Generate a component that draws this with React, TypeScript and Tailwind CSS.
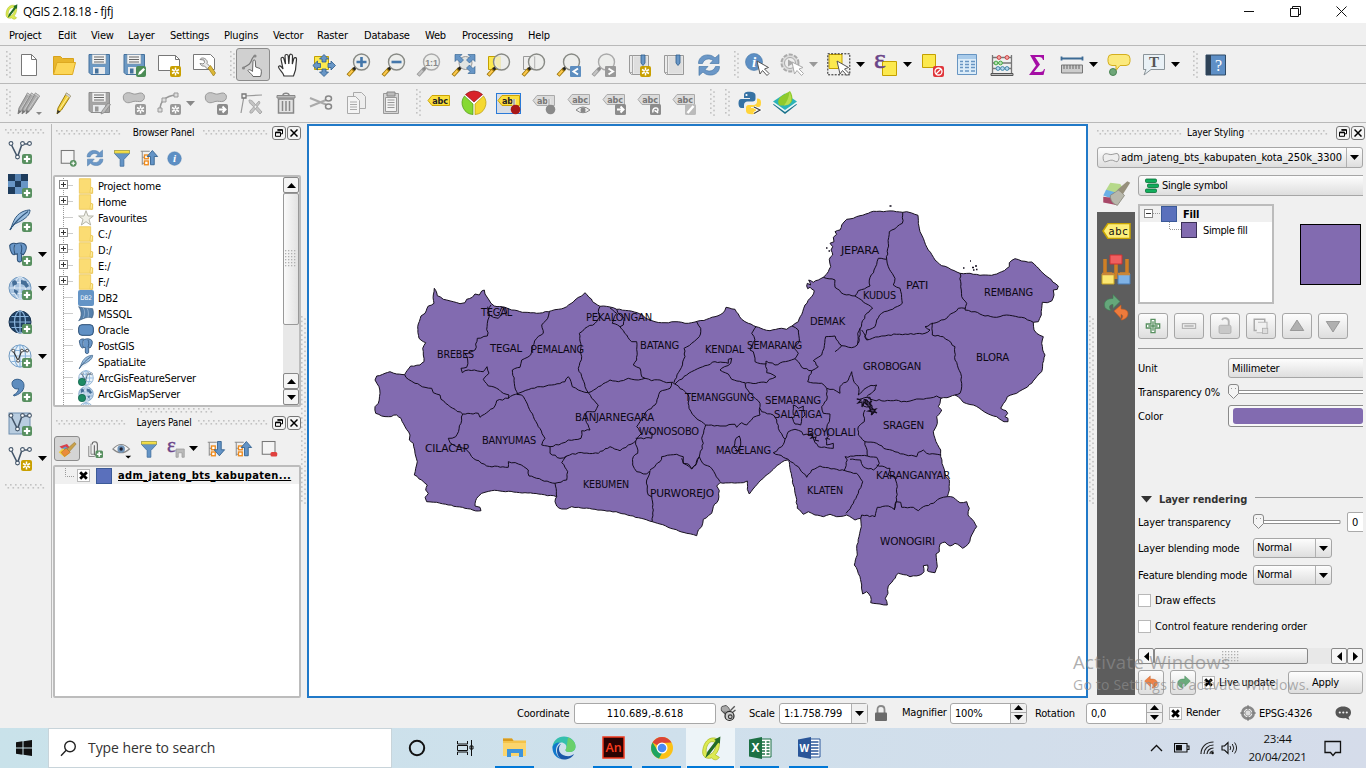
import React from "react";

type Kids = { children?: React.ReactNode };

/* ---------- icon helpers ---------- */
const I = ({ children, s = 24 }: Kids & { s?: number }) => (
  <svg width={s} height={s} viewBox="0 0 24 24" className="block shrink-0 overflow-visible" fill="none">
    {children}
  </svg>
);
const Caret = ({ c = "#000" }: { c?: string }) => (
  <svg width="9" height="5" viewBox="0 0 9 5" className="block shrink-0">
    <path d="M0 0h9L4.500 5z" fill={c} />
  </svg>
);
const GripV = ({ h = 28 }: { h?: number }) => (
  <svg width="6" height={h} className="block shrink-0">
    {Array.from({ length: Math.floor(h / 4.6) }, (_, i) => (
      <g key={i} fill="#c2c2c2">
        <rect x="0" y={i * 4.6} width="1.600" height="1.600" />
        <rect x="3.200" y={i * 4.6 + 2.3} width="1.600" height="1.600" />
      </g>
    ))}
  </svg>
);
const GripH = ({ w }: { w: number }) => (
  <svg width={w} height="6" className="block shrink-0">
    {Array.from({ length: Math.floor(w / 5) }, (_, i) => (
      <g key={i} fill="#c2c2c2">
        <rect x={i * 5} y="0" width="1.600" height="1.600" />
        <rect x={i * 5 + 2.5} y="3" width="1.600" height="1.600" />
      </g>
    ))}
  </svg>
);
const Plus = ({ x = 14, y = 14 }: { x?: number; y?: number }) => (
  <g>
    <rect x={x} y={y} width="10" height="10" rx="2" fill="#589060" />
    <path d={`M${x + 5} ${y + 1.8}v6.400M${x + 1.8} ${y + 5}h6.400`} stroke="#fff" strokeWidth="2.200" />
  </g>
);
const Star = ({ x = 13, y = 13, f = "#c9a000" }: { x?: number; y?: number; f?: string }) => (
  <g>
    <rect x={x} y={y} width="11" height="11" rx="2" fill={f} />
    <path d={`M${x + 5.5} ${y + 1.5}v8M${x + 2} ${y + 3.5}l7 4M${x + 9} ${y + 3.5}l-7 4`} stroke="#fff" strokeWidth="1.500" />
    <circle cx={x + 5.5} cy={y + 5.5} r="1" fill={f} />
  </g>
);
const Arrow = ({ x = 12, y = 8 }: { x?: number; y?: number }) => (
  <path d={`M${x} ${y}l3 13 2.500-3.500 4.500 5 2-2-4.500-4.500 4-1.500z`} fill="#fff" stroke="#555" strokeWidth="1" />
);

const FileNew = () => (
  <I><path d="M4.500 1.500h10l5 5v16h-15z" fill="#fff" stroke="#777" /><path d="M14.500 1.500v5h5" stroke="#777" /></I>
);
const FolderOpen = () => (
  <I>
    <path d="M1.500 21V3.500h7l2 2h11V9" fill="#e8b62c" stroke="#d8a21c" />
    <path d="M1.500 21.500L5 9.500h18.500l-3 12z" fill="#fcd657" stroke="#dda921" />
  </I>
);
const Floppy = ({ g = false, children }: Kids & { g?: boolean }) => (
  <I>
    <path d="M2 1.500h20.500v20H4l-2-2z" fill={g ? "#a5a5a5" : "#6c99c4"} stroke={g ? "#8c8c8c" : "#44719c"} />
    <path d="M5 1.500h14v9.500H5z" fill="#f2f2f2" stroke={g ? "#999" : "#7d94aa"} strokeWidth=".6" />
    <path d="M7 4h10M7 6.500h10M7 9h10" stroke="#666" />
    <path d="M6 14h12v7H6z" fill="#e8eaec" /><path d="M8 15.500h3.500v5H8z" fill={g ? "#999" : "#44719c"} />
    {children}
  </I>
);
const SaveEdit = () => (
  <Floppy><rect x="14" y="13" width="10" height="11" rx="2" fill="#4b8c55" /><path d="M16 22l1-3 4.500-4 1.500 1.500-4 4.500z" fill="#fff" /></Floppy>
);
const ComposerNew = () => (
  <I><path d="M1.500 2.500h17l4 4v11h-21z" fill="#fff" stroke="#777" /><path d="M18.500 2.500v4h4" stroke="#777" /><Star /></I>
);
const Wrench = () => (
  <I>
    <path d="M1.500 1.500h17l4 4v11h-21z" fill="#fff" stroke="#777" />
    <path d="M8 6.500c1-2 4-2 6 0 1.500 1.500 1.500 3 1 4l3 3-2.500 2.500-3-3c-2.500.5-4-1-4.500-2.500l3 .5 1.500-1.500-.5-2.500z" fill="#e8e8e8" stroke="#888" />
    <path d="M16 15l2.500-2.500 5 7.500-2 3z" fill="#dcb838" stroke="#9a7a18" strokeWidth=".7" />
  </I>
);
const Touch = () => (
  <I>
    <path d="M12 23.500c-1-3-5-4.500-5-6 .5-1.500 2.500-1 4.500 1L12 8c.3-1.500 2-1.500 2.300 0l.4 6 4.300 1.500c2 1 1.500 5 .5 8z" fill="#fff" stroke="#666" />
    <path d="M2 15l5-3c2-1 3-3 4-6l2-3" stroke="#777" strokeWidth="1.200" /><circle cx="14" cy="3" r="1.600" fill="#888" /><circle cx="2.500" cy="15" r="1.600" fill="#888" />
  </I>
);
const HandPan = () => (
  <I>
    <path d="M8 23c-1-4-5-6-5.500-9 .5-2 3-1 4.500 2L5 6c0-2 2.500-2.500 3 0l1.500 5L9 3c0-2 3-2 3.200 0l.6 8L13.500 2.500c.5-2 3-1.500 3 .5l-.2 8 1.500-5.500c1-1.500 3-1 2.700 1L19.500 17l-2 6z" fill="#fff" stroke="#333" strokeWidth="1.200" />
  </I>
);
const PanSel = () => (
  <I>
    <path d="M2.500 3.500h14v13h-14z" fill="#fce94f" stroke="#c4a000" />
    <path d="M12 1.500l4.500 4.500h-2.500v3h-4V6H7.500zM12 23.500l-4.500-4.500H10v-3h4v3h2.500zM.8 12.500l4.700-4.500v2.500h3v4h-3V17zM23.500 12.500L19 8v2.500h-3v4h3V17z" fill="#6896c6" stroke="#2c5c8c" strokeWidth=".8" />
  </I>
);
const Lens = ({ g = false, back, children }: Kids & { g?: boolean; back?: React.ReactNode }) => (
  <I>
    {back}
    <path d="M7.500 15.500L1 22.500" stroke={g ? "#999" : "#9a7408"} strokeWidth="4" />
    <path d="M5.500 17.500L1.500 22" stroke={g ? "#c4c4c4" : "#fcc84c"} strokeWidth="2.200" />
    <path d="M9 14L6.500 16.500" stroke={g ? "#888" : "#222"} strokeWidth="3" />
    <circle cx="14.500" cy="9" r="8" fill="#ecedeb" fillOpacity=".85" stroke={g ? "#aaa" : "#888a85"} strokeWidth="1.400" />
    {children}
  </I>
);
const ZoomIn = () => <Lens><path d="M14.500 4v10M9.500 9h10" stroke="#4477aa" strokeWidth="2.600" /></Lens>;
const ZoomOut = () => <Lens><path d="M9.500 9h10" stroke="#4477aa" strokeWidth="2.600" /></Lens>;
const Zoom11 = () => (
  <Lens g><text x="14.500" y="12.500" fontSize="9" fontWeight="700" textAnchor="middle" fill="#888" fontFamily="Liberation Sans, sans-serif">1:1</text></Lens>
);
const ZoomFull = () => (
  <I>
    <path d="M7.500 15.500L1 22.500" stroke="#9a7408" strokeWidth="4" /><path d="M5.500 17.500L1.500 22" stroke="#fcc84c" strokeWidth="2.200" /><path d="M9 14L6.500 16.500" stroke="#222" strokeWidth="3" />
    <circle cx="13.500" cy="10" r="6.500" fill="#e2e4e2" stroke="#999" />
    <path d="M3 1.500h7L8 3.500l3.500 3.500-3 3L5 6.500l-2 2zM23 1.500h-7l2 2L14.500 7l3 3L21 6.500l2 2zM23 20.500h-7l2-2-3.500-3.500 3-3 3.500 3.500 2-2z" fill="#6896c6" stroke="#2c5c8c" strokeWidth=".6" />
  </I>
);
const ZoomSel = () => <Lens back={<path d="M1.500 3.500h12v13h-12z" fill="#fce94f" stroke="#c4a000" />}><path d="M8.500 4h5v11q-5-2-5-6z" fill="#f3ebb0" /></Lens>;
const ZoomLayer = () => <Lens back={<path d="M1.500 3.500h12v13h-12z" fill="#eee" stroke="#999" />}><path d="M12.500 3.500v12" stroke="#bbb" /></Lens>;
const ZoomLast = () => <Lens><rect x="13" y="13" width="11" height="11" rx="1" fill="#5d8ec0" /><path d="M21 15.500l-4.500 3 4.500 3" stroke="#fff" strokeWidth="2" /></Lens>;
const ZoomNext = () => <Lens g><rect x="13" y="13" width="11" height="11" rx="1" fill="#999" /><path d="M16.500 15.500l4.500 3-4.500 3" stroke="#fff" strokeWidth="2" /></Lens>;
const Bookmark = ({ n = false }: { n?: boolean }) => (
  <I>
    <path d="M2.500 2.500h19v19h-17l-2-2z" fill="#ececec" stroke="#999" /><path d="M2.500 19.500h3M5.500 2.500v19" stroke="#aaa" /><path d="M7 3.500h13.500v17H7z" fill="#dedede" />
    <path d="M14 2h4v8l-2 2.500-2-2.500z" fill="#6896c6" stroke="#2c5c8c" strokeWidth=".8" />
    {n && <Star />}
  </I>
);
const Refresh = ({ s = 24 }: { s?: number }) => (
  <I s={s}>
    <path d="M1.500 10.500c0-6 5-9 10-8.500 3 .2 5 1.500 6.500 3L22 1.500v9h-9l3-3C12 4.500 7 6 5.500 10.500z" fill="#6b97c7" stroke="#4878a8" strokeWidth=".7" />
    <path d="M22.500 13.500c0 6-5 9-10 8.500-3-.2-5-1.500-6.500-3L2 22.500v-9h9l-3 3c4 3 9 1.500 10.500-3z" fill="#6b97c7" stroke="#4878a8" strokeWidth=".7" />
  </I>
);
const Info = ({ s = 24, arrow = true }: { s?: number; arrow?: boolean }) => (
  <I s={s}>
    <circle cx={arrow ? 9 : 12} cy={arrow ? 9 : 12} r={arrow ? 8.5 : 11} fill="#5d8fc4" stroke="#4878a8" strokeWidth=".6" />
    <text x={arrow ? 9 : 12} y={arrow ? 14 : 18} fontSize={arrow ? 15 : 18} fontStyle="italic" fontWeight="700" textAnchor="middle" fill="#fff" fontFamily="Liberation Serif, serif">i</text>
    {arrow && <Arrow />}
  </I>
);
const Action = () => (
  <I>
    <circle cx="10" cy="10" r="8.500" fill="#ddd" stroke="#aaa" strokeWidth="2" strokeDasharray="4 1.500" /><circle cx="10" cy="10" r="5.500" fill="#eee" stroke="#aaa" /><path d="M8 6.500l6 3.500-6 3.500z" fill="#aaa" />
    <path d="M12 9l2.500 12 2.500-3.500 4.500 5 2-2-4.500-4.500 4-1.500z" fill="#fff" stroke="#aaa" />
  </I>
);
const SelectF = () => (
  <I><path d="M2 1.500h13v14H2z" fill="#fce94f" stroke="#c4a000" /><rect x=".8" y=".8" width="22" height="21" stroke="#222" strokeDasharray="2 1.300" /><Arrow x={10} y={8} /></I>
);
const SelectExpr = () => (
  <I>
    <path d="M8.500 8.500h14v14h-14z" fill="#fce94f" stroke="#c4a000" />
    <text x="0" y="15" fontSize="28" fill="#6a4488" stroke="#6a4488" strokeWidth=".5" fontFamily="Liberation Serif, serif">ε</text>
  </I>
);
const Deselect = () => (
  <I><path d="M2.500 1.500h13v13h-13z" fill="#fce94f" stroke="#c4a000" /><rect x="13" y="13" width="11" height="11" rx="2" fill="#e0363b" /><circle cx="18.500" cy="18.500" r="3.500" stroke="#fff" strokeWidth="1.300" /><path d="M16 21l5-5" stroke="#fff" strokeWidth="1.300" /></I>
);
const AttrTable = () => (
  <I><path d="M2.500 1.500h19v20h-19z" fill="#dcecf8" stroke="#6795c2" /><path d="M3 2h18v4H3z" fill="#a9cbea" /><path d="M5 8.500h3M10 8.500h4M16 8.500h4M5 11.500h3M10 11.500h4M16 11.500h4M5 14.500h3M10 14.500h4M16 14.500h4M5 18h3M10 18h4M16 18h4" stroke="#6795c2" strokeWidth="1.500" /></I>
);
const Abacus = () => (
  <I>
    <path d="M2.500 2v18M21.500 2v18M3 4.500h18M3 10h18M3 15.500h18" stroke="#777" strokeWidth="1.300" /><path d="M1 20.500h22v2H1z" fill="#bbb" stroke="#555" />
    <g strokeWidth="1"><g fill="#f6a8a8" stroke="#c44"><circle cx="9" cy="4.500" r="1.900" /><circle cx="17" cy="4.500" r="1.900" /></g>
      <g fill="#b8e0b8" stroke="#4a4"><circle cx="6" cy="10" r="1.900" /><circle cx="10.500" cy="10" r="1.900" /></g>
      <g fill="#b8d8f0" stroke="#48a"><circle cx="8" cy="15.500" r="1.900" /><circle cx="12.500" cy="15.500" r="1.900" /><circle cx="17" cy="15.500" r="1.900" /></g></g>
  </I>
);
const Sigma = () => <I><path d="M5 2h14v5h-1c-.5-2-1.500-3-4-3H10l5 7.500L9 19h6c2.500 0 3.500-1 4-3h1l-1.500 6H4l7-9.500z" fill="#a50ea5" /></I>;
const Ruler = () => (
  <I><path d="M1 5.500h22M1.500 3.500v4M22.500 3.500v4" stroke="#3c6a94" strokeWidth="1.800" /><path d="M1.500 12h21v8h-21z" fill="#ccc" stroke="#777" /><path d="M4 12v4M7 12v4M10 12v4M13 12v4M16 12v4M19 12v4" stroke="#666" /></I>
);
const MapTip = () => (
  <I><path d="M5 1.500h14q4 0 4 4v3q0 4-4 4h-6l-4 5 0-5H5q-4 0-4-4v-3q0-4 4-4z" fill="#fbe97d" stroke="#d4ae1e" /><circle cx="6" cy="19" r="3.500" fill="#6fa678" stroke="#4a8554" /></I>
);
const TextAnn = () => (
  <I><path d="M1.500 1.500h21v15H9l-7 5.500 2-5.500H1.500z" fill="#e9f1f6" stroke="#8b9499" /><text x="12" y="14" fontSize="15" fontWeight="700" textAnchor="middle" fill="#555" fontFamily="Liberation Serif, serif">T</text></I>
);
const HelpBook = () => (
  <I><path d="M2 2h19.500v20H2z" fill="#5e8fc6" stroke="#2e4a66" /><path d="M2 2h5v20H2z" fill="#2e4257" /><text x="14.500" y="17.500" fontSize="16" textAnchor="middle" fill="#fff" fontFamily="Liberation Serif, serif">?</text></I>
);
const Pencil = ({ x = 0, g = false }: { x?: number; g?: boolean }) => (
  <g transform={`translate(${x} 0)`}>
    <path d="M13.500 2l4 3-9 14-4.500 4 1-6z" fill={g ? "#aaa" : "#f2cf3c"} stroke={g ? "#8a8a8a" : "#9a7d10"} />
    <path d="M12.500 3.500l4.200 3.200 1-1.700-4-3z" fill={g ? "#ccc" : "#d8d8d8"} stroke="#999" strokeWidth=".6" /><path d="M4.500 19l-.5 4 3.500-2.500z" fill={g ? "#777" : "#333"} />
    <path d="M15 5.500l-8.500 13" stroke={g ? "#ccc" : "#fdf0a0"} />
  </g>
);
const EditsAll = () => (
  <I><g><Pencil g x={-3} /><Pencil g x={1} /><Pencil g x={5} /></g><path d="M19 21h6l-3 3z" fill="#888" /></I>
);
const EditToggle = () => <I><Pencil x={1} /></I>;
const SaveG = () => <Floppy g><path d="M14 23l1-3 6-8 2.500 1.500-6 8z" fill="#bbb" stroke="#888" strokeWidth=".8" /></Floppy>;
const BLOB = "M1.500 8C0 2 6 .5 10 2.500c3 1.500 5 0 8-.5 5-.5 6 6 2 8-3 1.500-6-.5-9 .5C8 12 3 13 1.500 8z";
const AddPoly = () => <I><path d={BLOB} fill="#c4c4c4" stroke="#999" /><Star f="#999" /></I>;
const AddCurve = () => <I><path d="M3 19C3 10 8 5 19 4" stroke="#999" strokeWidth="1.500" /><path d="M1 17h4v4H1zM5 7h4v4H5zM17 2h4v4h-4z" fill="#ddd" stroke="#999" /><Star f="#999" /></I>;
const MoveF = () => <I><path d={BLOB} fill="#c4c4c4" stroke="#999" /><rect x="13" y="13" width="11" height="11" rx="2" fill="#8c8c8c" /><path d="M15 18.500h6M18.500 15.500l3 3-3 3" stroke="#fff" strokeWidth="2" /></I>;
const NodeTool = () => <I><path d="M5 5L2 22M5 5l18-1" stroke="#999" strokeWidth="1.200" /><path d="M3 3h4v4H3z" fill="#eee" stroke="#777" strokeWidth="1.300" /><path d="M10 9c2 0 4 1 5 3l8 9-2 2-8-9c-2-1-3-3-3-5zM20 10l-9 10 0 2 2 0 8-10z" fill="#c4c4c4" stroke="#aaa" /></I>;
const Trash = () => <I><path d="M4.500 8h15v14h-15z" fill="#e4e4e4" stroke="#888" strokeWidth="1.500" /><path d="M3 4.500h18v2.500H3z" fill="#bbb" stroke="#888" /><path d="M9 4c0-2.500 6-2.500 6 0M8.500 10v10M12 10v10M15.500 10v10" stroke="#888" strokeWidth="1.500" /></I>;
const Scissors = () => <I><path d="M1 7l16 6.500M1 15.500L17 9" stroke="#aaa" strokeWidth="2" /><ellipse cx="19.500" cy="7.500" rx="3" ry="2.500" stroke="#888" strokeWidth="1.500" /><ellipse cx="19.500" cy="15.500" rx="3" ry="2.500" stroke="#888" strokeWidth="1.500" /></I>;
const Copy = () => <I><path d="M9.500 1.500h8l4 4v12h-12z" fill="#eee" stroke="#aaa" /><path d="M3.500 5.500h8l4 4v13h-12z" fill="#f4f4f4" stroke="#aaa" /><path d="M6 11h7M6 13.500h7M6 16h7M6 18.500h7" stroke="#aaa" /></I>;
const Paste = () => <I><path d="M4.500 2.500h15v20h-15z" fill="#d4d4d4" stroke="#999" /><path d="M6.500 6.500h11v14h-11z" fill="#f2f2f2" stroke="#999" /><path d="M8 1h8v4H8z" fill="#bbb" stroke="#888" /><path d="M8.500 9h7M8.500 11.500h7M8.500 14h7M8.500 16.500h7" stroke="#999" /></I>;

const Tag = ({ g = false, y = 5, t = "abc" }: { g?: boolean; y?: number; t?: string }) => (
  <g transform={`translate(0 ${y})`}>
    <path d="M1 5.500L5 .5h17.500v10H5z" fill={g ? "#dcdcdc" : "#fbdf3e"} stroke={g ? "#aaa" : "#cda505"} />
    <text x={t === "abc" ? 13 : 10.5} y="8.800" fontSize="9" fontWeight="700" textAnchor="middle" fill={g ? "#777" : "#222"} fontFamily="DejaVu Sans Condensed, sans-serif">{t}</text>
  </g>
);
const LblPlain = () => <I><Tag y={4} /></I>;
const LblPie = () => (
  <I><circle cx="12" cy="12" r="11" fill="#fff" /><path d="M12 11L3.500 3.500a12 12 0 0 1 17 0z" fill="#d8232a" stroke="#8a1015" strokeWidth=".7" /><path d="M11 13v10.500A11.500 11.500 0 0 1 2.500 5z" fill="#86d932" stroke="#4c9410" strokeWidth=".7" /><path d="M13 13v10.500A11.500 11.500 0 0 0 21.500 5z" fill="#f5d931" stroke="#b89a10" strokeWidth=".7" /></I>
);
const LblPin = ({ g = false }: { g?: boolean }) => (
  <I><Tag g={g} y={4} t="ab" /><path d="M17 8v8" stroke="#eee" strokeWidth="3" /><path d="M17 8v8" stroke={g ? "#999" : "#777"} /><circle cx="18.500" cy="18.500" r="4.800" fill={g ? "#8a8a8a" : "#a81818"} /></I>
);
const LblEye = () => <I><Tag g y={3} /><path d="M9 19q7-6 14 0-7 5.500-14 0z" fill="#eee" stroke="#888" /><circle cx="16" cy="19" r="2.500" fill="#888" /></I>;
const LblBox = ({ k }: { k: string }) => (
  <I><Tag g y={3} /><rect x="13" y="13" width="11" height="11" rx="1.500" fill={k === "edit" ? "#bbb" : "#8c8c8c"} />
    {k === "move" && <path d="M15 18.500h6M18.500 15.500l3 3-3 3" stroke="#fff" strokeWidth="2" />}
    {k === "rot" && <path d="M16 21.500c-1-5 5-6 5-2.500 0 2-3 2-3 0M21 22l-2-2" stroke="#fff" strokeWidth="1.500" />}
    {k === "edit" && <path d="M15.500 22l6-7" stroke="#fff" strokeWidth="2.500" />}
  </I>
);
const Python = () => (
  <I>
    <path d="M11 .8c-4 0-5 1.500-5 3.500V7h6v1H3.500C1 8 .5 10 .5 12.500S1.500 17 3.500 17H6v-3c0-2 1.500-3.500 3.500-3.500h5c2 0 3-1 3-3v-3c0-2.500-2-3.700-6.500-3.700z" fill="#3672a4" />
    <path d="M19 7.500v3.300c0 2-1.500 3.200-3.500 3.200h-5c-1.500 0-2.500 1-2.500 3v3c0 2 2 3.300 5.500 3.300S18 22 18 20.500V17h-5v-1h7c2.500 0 3-1.500 3-4.500 0-2.500-1-4-4-4z" fill="#ffd43b" />
    <circle cx="8.500" cy="4" r="1.100" fill="#fff" /><path d="M16 16l6 3-6 3.500" stroke="#fff" strokeWidth="3" /><path d="M16 16l6 3-6 3.500" stroke="#444" strokeWidth="1.300" />
  </I>
);
const Leaf = () => (
  <I>
    <path d="M12 5.500l12 8-12 9.500-12-9.500z" fill="#17708a" /><path d="M12 4.500l12 8-12 8.500L0 12.500z" fill="#e8f6f8" /><path d="M12 2.500l12 8-12 8.500L0 10.500z" fill="#2bb3b8" />
    <path d="M6 14C3 6 11 4 17 0c4 6 3 13-3 14-3 .5-6 1-8 0z" fill="#8fca2c" /><path d="M11 14.500C14 11 16 6 16.500 1c3 6 2 12-2.500 13z" fill="#b4de50" />
  </I>
);

/* left toolbar */
const VNodes = ({ c = "#44566a" }: { c?: string }) => (
  <g stroke={c} fill="none"><path d="M3 4l6.500 13L14 4h7" strokeWidth="1.600" /><g fill="#fff" strokeWidth="1.100"><circle cx="3" cy="3.500" r="1.900" /><circle cx="9.500" cy="17" r="1.900" /><circle cx="14.500" cy="3.500" r="1.900" /><circle cx="21.500" cy="3.500" r="1.900" /></g></g>
);
const Globe = ({ dark = false, light = false }: { dark?: boolean; light?: boolean }) => (
  <g>
    <circle cx="12" cy="12" r="11" fill={dark ? "#1f3f62" : light ? "#eaf3fa" : "#a9c4e0"} stroke={dark ? "#17324f" : "#6f98bf"} />
    <g stroke={dark ? "#8ab4dc" : light ? "#8ab4dc" : "#dce8f4"} strokeWidth="1.200"><path d="M1.500 12h21M12 1v22M3.500 6.500h17M3.500 17.500h17" /><ellipse cx="12" cy="12" rx="5.500" ry="11" /></g>
    {!dark && !light && <path d="M4 6c2-3 5-2 5 1s-3 1-4 4zM13 4l5 1 3 5-3 2-2-3-3-1zM6 13l4 2-1 4-3-3zM14 16l4-2-1 5z" fill="#446e98" />}
  </g>
);
const Elephant = () => (
  <path d="M2 4c2-3 6-3 8-2 3-1.500 9-1 11 2 1.500 3-.5 8-3 11l-2-1v8c-1 2-5 2-5-1v-7l-3 .5C5 17 2 9 2 4z M8 3c-1 3-1 7 0 11M15 3c2 3 1 8 0 11" fill="#6a97c8" stroke="#2b4f76" strokeWidth="1.200" />
);
const Feather = () => (
  <g><path d="M2 22c3-6 4-14 12-18 3-1.500 6-2 8-2 0 4-3 7-6 9-5 4-10 4-12 8z" fill="#9cbfe0" stroke="#31587f" /><path d="M2 22C7 14 12 9 20 3.500" stroke="#31587f" strokeWidth="1.200" /><path d="M4 20c5-2 9-4 12-8" stroke="#dce8f4" /></g>
);
const VecAdd = () => <I><VNodes /><Plus /></I>;
const RasAdd = () => (
  <I><path d="M0 0h20v20H0z" fill="#6896c6" /><path d="M0 0h7v7H0zM13 0h7v7h-7zM7 7h6v6H7zM0 13h7v7H0z" fill="#1e3c5c" /><path d="M7 0h6v7H7z" fill="#5580ae" /><Plus /></I>
);
const FeaAdd = () => <I><Feather /><Plus /></I>;
const PgAdd = () => <I><g transform="scale(.85)"><Elephant /></g><Plus /></I>;
const WmsAdd = () => <I><Globe /><Plus /></I>;
const WcsAdd = () => <I><Globe dark /><Plus /></I>;
const WfsAdd = () => <I><Globe light /><g transform="translate(3 4) scale(.75)"><VNodes c="#333" /></g><Plus /></I>;
const CsvAdd = () => <I><path d="M4 5.500c0-6 12-6 12 2 0 6-5 9-10 10.500l-.5-1c3-1.500 5-3.500 5-6.500C7 12 4 9 4 5.500z" fill="#5f8dbe" stroke="#36608c" /><Plus /></I>;
const VirtAdd = () => <I><rect x="1" y="1" width="21" height="21" fill="#b9cde0" stroke="#6f8eae" /><VNodes /><Plus /></I>;
const VecNew = () => <I><VNodes /><Star y={14} /></I>;

/* panel icons */
const NewLayerBox = ({ minus = false }: { minus?: boolean }) => (
  <I s={18}><rect x="3" y="2" width="17" height="17" stroke="#777" strokeWidth="1.400" fill="#f4f4f4" />
    {minus ? <rect x="14" y="16" width="9" height="6" rx="2" fill="#e0413e" /> : <g><circle cx="19" cy="19" r="4.500" fill="#589060" /><path d="M16.500 19h5M19 16.500v5" stroke="#fff" strokeWidth="1.500" /></g>}
  </I>
);
const Funnel = () => (
  <I s={18}><path d="M2 2h20v4l-7.500 8v9h-5v-9L2 6z" fill="#6494c6" stroke="#3b6a9a" /><path d="M2 2h20v3.500H2z" fill="#f6e04a" stroke="#c0a82a" strokeWidth=".7" /></I>
);
const Collapse = ({ down = false }: { down?: boolean }) => (
  <I s={18}><path d="M1 3h12M3 3v18M3 11h4M3 19h4" stroke="#888" strokeWidth="1.300" /><rect x="6" y="8" width="5" height="5" fill="#fff" stroke="#ef8a1a" strokeWidth="1.800" /><rect x="6" y="16" width="5" height="5" fill="#fff" stroke="#ef8a1a" strokeWidth="1.800" />
    <path d={down ? "M14 2h5v11h4.500L16.500 21l-7-8H14z" : "M14 21h5V10h4.500L16.500 2l-7 8H14z"} fill="#6494c6" stroke="#2c5c8c" strokeWidth="1.100" /></I>
);
const Brush = ({ s = 20 }: { s?: number }) => (
  <I s={s}><path d="M3 9l9-3 4 5-7 3z" fill="#d8404a" /><path d="M5 12l5-3 5 3-3 3z" fill="#5a9fd4" /><path d="M9 22l-7-6 5-5 8 6z" fill="#f4d03c" /><path d="M9 21L5 16l6-5 5 5z" fill="#e98c3c" stroke="#b36412" strokeWidth=".6" /><path d="M12 12l9-8 2 2-8 9z" fill="#c9a04a" stroke="#97752c" strokeWidth=".6" /></I>
);
const AddGroup = () => <I s={18}><path d="M5 8v14h8M8 5v14h8" stroke="#888" strokeWidth="1.300" /><path d="M9.500 6c0-5 7-5 7 0v12c0 3-4 3-4 0V7" stroke="#666" strokeWidth="1.500" /><Plus y={14} /></I>;
const Eye = () => <I s={20}><path d="M1 12q10-11 20 0-10 9-20 0z" fill="#f4f4f4" stroke="#888" strokeWidth="1.300" /><circle cx="11" cy="12" r="4.500" fill="#6f93b8" /><circle cx="11" cy="12" r="2" fill="#223" /><path d="M16 20h7l-3.500 3.500z" fill="#000" /></I>;
const EpsFilter = () => <I s={18}><text x="0" y="16" fontSize="28" fill="#6a4488" stroke="#6a4488" strokeWidth=".6" fontFamily="Liberation Serif, serif">ε</text><path d="M12 12h11v11h-3v-6h-5v6h-3z" fill="#bbb" stroke="#999" /></I>;

/* ---------- form widgets ---------- */
const BTN = "bg-linear-to-b from-[#fdfdfd] to-[#dedede] border border-[#a6a6a6] rounded-[3px]";
const WinBtns = () => (
  <div className="flex gap-[1px]">
    <div className="w-[14px] h-[14px] rounded-[3px] border border-[#777] bg-[#f4f4f4] flex items-center justify-center">
      <svg width="8" height="8" viewBox="0 0 8 8"><path d="M2.500.8h5v4h-2M.5 3.300h5v4h-5z" fill="none" stroke="#000" /><path d="M2.500 1h5M.5 3.500h5" stroke="#000" strokeWidth="1.500" /></svg>
    </div>
    <div className="w-[14px] h-[14px] rounded-[3px] border border-[#777] bg-[#f4f4f4] flex items-center justify-center">
      <svg width="8" height="8" viewBox="0 0 8 8"><path d="M.5.5l7 7M7.500.5l-7 7" stroke="#000" strokeWidth="1.500" /></svg>
    </div>
  </div>
);
const PanelHead = ({ t, l, m, r }: { t: string; l: number; m: string; r: number }) => (
  <div className="flex h-[17px] items-center">
    <GripH w={l} /><div className={"text-center text-[10px] tracking-[-0.150px] " + m}>{t}</div><GripH w={r} />
    <div className="ml-auto"><WinBtns /></div>
  </div>
);
const Combo = ({ t, c }: { t: string; c: string }) => (
  <div className={BTN + " flex h-[20px] items-center " + c}>
    <span className="grow pl-[3px]">{t}</span>
    <div className="flex h-full w-[16px] items-center justify-center border-l border-[#b0b0b0]"><Caret /></div>
  </div>
);
const Spin = ({ t, c }: { t: string; c: string }) => (
  <div className={"flex h-[21px] items-center overflow-hidden rounded-[3px] border border-[#a8a8a8] bg-white " + c}>
    <span className="grow pl-[4px] pt-[2px]">{t}</span>
    <div className="flex h-full w-[16px] flex-col border-l border-[#a8a8a8] bg-[#f0f0f0]">
      <div className="flex h-1/2 items-center justify-center border-b border-[#a8a8a8]"><div className="rotate-180"><Caret /></div></div>
      <div className="flex h-1/2 items-center justify-center"><Caret /></div>
    </div>
  </div>
);
const Check = ({ on = false }: { on?: boolean }) => (
  <div className="flex h-[13px] w-[13px] shrink-0 items-center justify-center border border-[#b8b8b8] bg-white">
    {on && <svg width="9" height="9" viewBox="0 0 9 9"><path d="M1.200 1.200l6.600 6.600M7.800 1.200L1.200 7.800" stroke="#000" strokeWidth="2.800" /></svg>}
  </div>
);
const Slider = ({ w }: { w: number }) => (
  <svg width={w} height="16" className="block shrink-0">
    <path d={`M8 6.500H${w - 1}v3H8`} fill="#fff" stroke="#909090" />
    <path d="M.5 3q0-2.500 2.500-2.500h5q2.500 0 2.500 2.500v6.500l-5 5-5-5z" fill="#f4f4f4" stroke="#888" /><path d="M3 4.500h1M7 4.500h1" stroke="#999" />
  </svg>
);
const Undo = ({ g = false, s = 18 }: { g?: boolean; s?: number }) => (
  <I s={s}><path d={g ? "M23 9.500l-9-8v5C6 6 2 9 3 14c.5 3 4 6 8 7-2-4-2-8 3-7.500v5z" : "M1 9.500l9-8v5c8-.5 12 2.500 11 7.500-.5 3-4 6-8 7 2-4 2-8-3-7.500v5z"} fill={g ? "#6bab7c" : "#ee8347"} stroke={g ? "#3f8252" : "#c65a1e"} strokeWidth=".7" /></I>
);

/* ---------- toolbars ---------- */
const Cell = ({ children, w = "w-[35px]" }: Kids & { w?: string }) => <div className={"flex h-full shrink-0 items-center justify-center " + w}>{children}</div>;
const Drop = ({ c }: { c?: string }) => <div className="flex w-[12px] shrink-0"><Caret c={c} /></div>;

const Toolbar1 = () => (
  <div className="flex h-[39px] shrink-0 items-center border-t border-b border-[#b9b9b9] pl-[6px]">
    <GripV /><Cell w="w-[34px]"><FileNew /></Cell><Cell><FolderOpen /></Cell><Cell><Floppy /></Cell><Cell><SaveEdit /></Cell><Cell><ComposerNew /></Cell><Cell><Wrench /></Cell>
    <div className="w-[9px] shrink-0" /><GripV />
    <div className="flex h-[33px] w-[34px] shrink-0 items-center justify-center rounded-[3px] border border-[#8c8c8c] bg-[#d0d0d0]"><Touch /></div>
    <Cell w="w-[36px]"><HandPan /></Cell><Cell><PanSel /></Cell><Cell><ZoomIn /></Cell><Cell><ZoomOut /></Cell><Cell><Zoom11 /></Cell><Cell><ZoomFull /></Cell><Cell><ZoomSel /></Cell><Cell><ZoomLayer /></Cell><Cell><ZoomLast /></Cell><Cell><ZoomNext /></Cell><Cell><Bookmark n /></Cell><Cell><Bookmark /></Cell><Cell><Refresh /></Cell>
    <div className="w-[8px] shrink-0" /><GripV />
    <Cell w="w-[34px]"><Info /></Cell><Cell><Action /></Cell><Drop c="#999" /><Cell><SelectF /></Cell><Drop /><Cell><SelectExpr /></Cell><Drop /><Cell w="w-[34px]"><Deselect /></Cell><Cell><AttrTable /></Cell><Cell><Abacus /></Cell><Cell><Sigma /></Cell><Cell><Ruler /></Cell><Drop /><Cell><MapTip /></Cell><Cell><TextAnn /></Cell><Drop />
    <div className="w-[10px] shrink-0" /><GripV /><Cell w="w-[34px]"><HelpBook /></Cell>
  </div>
);
const Toolbar2 = () => (
  <div className="flex h-[39px] shrink-0 items-center border-b border-[#b9b9b9] pl-[6px]">
    <GripV /><Cell w="w-[34px]"><EditsAll /></Cell><Cell><EditToggle /></Cell><Cell><SaveG /></Cell><Cell><AddPoly /></Cell><Cell><AddCurve /></Cell><Drop c="#888" /><Cell><MoveF /></Cell><Cell><NodeTool /></Cell><Cell><Trash /></Cell><Cell><Scissors /></Cell><Cell><Copy /></Cell><Cell><Paste /></Cell>
    <div className="w-[8px] shrink-0" /><GripV />
    <Cell w="w-[34px]"><LblPlain /></Cell><Cell><LblPie /></Cell>
    <Cell><div className="flex h-[21px] w-[25px] items-center justify-center border border-[#2a7ad8] bg-[#d8dde4]"><LblPin /></div></Cell>
    <Cell><LblPin g /></Cell><Cell><LblEye /></Cell><Cell><LblBox k="move" /></Cell><Cell><LblBox k="rot" /></Cell><Cell><LblBox k="edit" /></Cell>
    <div className="w-[9px] shrink-0" /><GripV /><div className="w-[9px] shrink-0" /><GripV />
    <Cell w="w-[37px]"><Python /></Cell><Cell w="w-[33px]"><Leaf /></Cell>
  </div>
);
const SIDE: [React.ReactNode, boolean][] = [
  [<VecAdd />, false], [<RasAdd />, false], [<FeaAdd />, false], [<PgAdd />, true], [<WmsAdd />, true], [<WcsAdd />, false], [<WfsAdd />, true], [<CsvAdd />, false], [<VirtAdd />, false], [<VecNew />, true],
];
const SideBar = () => (
  <div className="flex w-[52px] shrink-0 flex-col border-r border-[#b9b9b9] pt-[5px]">
    <div className="pl-[5px]"><GripH w={42} /></div>
    {SIDE.map(([ic, d], i) => (
      <div key={i} className="flex h-[34px] items-center pl-[8px]">{ic}{d && <div className="ml-[6px]"><Caret /></div>}</div>
    ))}
    <div className="pl-[5px] pt-[9px]"><GripH w={42} /></div>
  </div>
);

/* ---------- browser tree ---------- */
const Folder = () => <I s={16}><path d="M2 1h17v13l3 1v8H2z" fill="#fbdc73" stroke="#e8bf45" /><path d="M19 14l-1 8 3 1 1-8z" fill="#fff0a8" stroke="#e8bf45" /></I>;
const TREE: [string, React.ReactNode, boolean][] = [
  ["Project home", <Folder />, true],
  ["Home", <Folder />, true],
  ["Favourites", <I s={16}><path d="M12 1l3 8h8l-6.500 5 2.500 8.500-7-5-7 5L7.500 14 1 9h8z" fill="#f0f0e8" stroke="#b4b4a8" strokeWidth="1.500" /></I>, false],
  ["C:/", <Folder />, true],
  ["D:/", <Folder />, true],
  ["E:/", <Folder />, true],
  ["F:/", <Folder />, true],
  ["DB2", <I s={16}><rect width="24" height="24" rx="3" fill="#6494c6" /><text x="12" y="15.500" fontSize="9.500" textAnchor="middle" fill="#fff" fontFamily="DejaVu Sans Condensed, sans-serif">DB2</text></I>, false],
  ["MSSQL", <I s={16}><path d="M1 1c8 3 15 2 21 3 2 6 1 10-1 14-6-3-13 1-20 4 5-6 5-14 0-21z" fill="#5580ac" stroke="#36587a" /><path d="M8 3c3 5 2 11 0 15M14 4c2 4 2 9 1 13" stroke="#a4c0dc" /></I>, false],
  ["Oracle", <I s={16}><rect x="1" y="4" width="22" height="16" rx="5" fill="#6090c4" stroke="#2b4f76" strokeWidth="1.500" /></I>, false],
  ["PostGIS", <I s={16}><Elephant /></I>, false],
  ["SpatiaLite", <I s={16}><Feather /></I>, false],
  ["ArcGisFeatureServer", <I s={16}><Globe light /><g transform="translate(4 3) scale(.75)"><VNodes /></g><circle cx="6" cy="18" r="5.500" fill="#1c8a64" stroke="#0b5b44" /></I>, false],
  ["ArcGisMapServer", <I s={16}><Globe /><circle cx="6" cy="18" r="5.500" fill="#1c8a64" stroke="#0b5b44" /></I>, false],
  ["", <I s={16}><Globe light /></I>, false],
];
const ScrollBtn = ({ up = false }: { up?: boolean }) => (
  <div className="flex h-[16px] w-full shrink-0 items-center justify-center rounded-[2px] border border-[#888] bg-[#f4f4f4]"><div className={up ? "rotate-180" : ""}><Caret /></div></div>
);
const Dots = ({ tall = false }: { tall?: boolean }) => (
  <svg width={tall ? 12 : 18} height={tall ? 18 : 11}><g fill="#b0b0b0">{Array.from({ length: tall ? 6 : 4 }, (_, r) => Array.from({ length: tall ? 4 : 6 }, (_, c) => <rect key={r + "-" + c} x={c * 3} y={r * 3} width="1.300" height="1.300" />))}</g></svg>
);
const BrowserPanel = () => (
  <div className="flex flex-col">
    <div className="pl-[3px]"><PanelHead t="Browser Panel" l={68} m="w-[79px]" r={68} /></div>
    <div className="flex h-[34px] items-center gap-[9px] pl-[6px]"><NewLayerBox /><Refresh s={18} /><Funnel /><Collapse /><Info s={15} arrow={false} /></div>
    <div className="flex h-[232px] w-[248px] overflow-hidden rounded-[2px] border-2 border-[#bcbcbc] bg-white pl-[2px]">
      <div className="grow overflow-hidden pt-[1px]">
        {TREE.map(([t, ic, e], i) => (
          <div key={i} className="flex h-[16px] items-center">
            <svg width="20" height="16" className="mr-[1px] block shrink-0">
              <path d="M6.500 0v16M6.500 7.500H16" stroke="#999" strokeDasharray="1 1" />
              {e && <g><rect x="2.500" y="2.500" width="8" height="8" fill="#fff" stroke="#888" /><path d="M4 6.500h5M6.500 4v5" stroke="#333" /></g>}
            </svg>
            {ic}
            <span className="pl-[4px] pt-[2px]">{t}</span>
          </div>
        ))}
      </div>
      <div className="flex w-[16px] shrink-0 flex-col bg-[#e8e8e8]">
        <ScrollBtn up />
        <div className="flex h-[132px] items-center justify-center rounded-[2px] border border-[#999] bg-linear-to-r from-[#fafafa] to-[#e2e2e2]"><Dots tall /></div>
        <div className="grow" />
        <ScrollBtn up /><ScrollBtn />
      </div>
    </div>
  </div>
);
const LayersPanel = () => (
  <div className="flex grow flex-col">
    <div className="flex h-[7px] items-center justify-center"><GripH w={78} /></div>
    <div className="pl-[3px]"><PanelHead t="Layers Panel" l={74} m="w-[72px]" r={74} /></div>
    <div className="flex h-[34px] items-center pl-[1px] pt-[1px]">
      <div className="flex h-[25px] w-[26px] items-center justify-center rounded-[3px] border border-[#8c8c8c] bg-[#d4d4d4]"><Brush /></div>
      <Cell w="w-[28px]"><AddGroup /></Cell><Cell w="w-[27px]"><Eye /></Cell><Cell w="w-[27px]"><Funnel /></Cell><Cell w="w-[27px]"><EpsFilter /></Cell><Drop /><div className="w-[1px]" /><Cell w="w-[27px]"><Collapse down /></Cell><Cell w="w-[27px]"><Collapse /></Cell><Cell w="w-[26px]"><NewLayerBox minus /></Cell>
    </div>
    <div className="w-[248px] grow overflow-hidden rounded-[2px] border-2 border-[#bcbcbc] bg-white">
      <div className="flex h-[17px] items-center bg-[#f0f0f0] pl-[9px]">
        <svg width="13" height="16" className="block"><path d="M1.500 0v8.500H11" fill="none" stroke="#999" strokeDasharray="1 1" /></svg>
        <Check on />
        <div className="ml-[6px] h-[16px] w-[16px] border border-[#3b5a98] bg-[#5a70bc]" />
        <span className="ml-[6px] pt-[1px] text-[11px] font-bold tracking-[0.370px] underline">adm_jateng_bts_kabupaten...</span>
      </div>
    </div>
  </div>
);

/* ---------- map ---------- */
type P = [number, number];
const trace = (ox: number, oy: number, s: string): P[] =>
  s.trim().split(/\s+/).map((p) => { const [x, y] = p.split(",").map(Number); return [ox + x / 3, oy + y / 3]; });
/* subdivides each segment and displaces the new points a little, so coasts and borders look surveyed */
const rough = (pts: P[], amp: number): string => {
  const out: P[] = [];
  pts.forEach((p, i) => {
    out.push(p);
    const q = pts[i + 1];
    if (!q) return;
    const len = Math.hypot(q[0] - p[0], q[1] - p[1]);
    const n = Math.floor(len / 2.6);
    for (let k = 1; k < n; k++) {
      const t = k / n;
      const x = p[0] + (q[0] - p[0]) * t, y = p[1] + (q[1] - p[1]) * t;
      const r = Math.sin(x * 12.9898 + y * 78.233) * 43758.5453;
      const d = (r - Math.floor(r) - 0.5) * 2 * amp;
      out.push([x - ((q[1] - p[1]) / len) * d, y + ((q[0] - p[0]) / len) * d]);
    }
  });
  return "M" + out.map((p) => p[0].toFixed(1) + " " + p[1].toFixed(1)).join("L");
};
const W = (s: string) => trace(365, 280, s);
const S = (s: string) => trace(660, 300, s);
const E = (s: string) => trace(770, 200, s);

const COAST: P[] = [
  ...W("119,284 137,258 165,255 177,245 175,225 173,205 182,188 162,175 158,140 168,108 180,100 190,78 207,70 205,45 208,25 217,47 235,58 265,65 285,71 300,68 305,58 322,52 330,42 343,45 350,33 358,30 360,42 372,60 378,70 388,78 420,82 440,90 480,97 515,100 550,95 580,88 605,80 630,60 650,48 660,38 672,52 690,70 705,79 735,81 755,88 790,92 825,102 850,118 870,125 900,128 930,125 960,130"),
  ...S("105,66 140,58 165,50 190,38 198,22 225,28 235,42 245,58 265,70 288,80 310,88 330,92 365,85 380,88"),
  ...E("66,378 85,365 98,335 105,315 125,290 133,272 120,262 113,266 110,258 112,250 122,255 116,240 130,247 145,240 160,232 175,215 182,200 178,178 188,165 183,150 188,140 180,130 192,125 190,112 200,103 195,95 210,90 215,75 230,58 250,55 270,47 295,40 310,34 340,35 370,33 398,37 410,35 425,39 444,46 445,70 450,95 460,115 475,150 495,180 515,197 535,203 570,220 600,220 630,226 665,226 695,215 718,200 718,188 735,176 755,183 785,186 800,200 825,225 855,250 865,258 862,268 850,270 852,285 845,303 832,308 817,307 815,325 814,345 805,365 790,367 792,390 800,400 820,410 815,430 818,450 825,465 818,490 815,515 800,530 785,550 765,565 740,580 712,590 705,605 692,625 708,632 713,640 705,650 714,655 714,665 702,665 680,650 655,642 635,630 610,615 580,607 565,590 555,585 540,590 512,595 510,610 505,620 515,630 500,650 502,670 490,695 498,725 512,750"),
  ...S("842,470 850,500 858,530 868,540 868,570 862,590 880,592 900,608 920,605 928,625 924,645 942,665 950,680 935,705 925,732 908,745 900,738 885,730 870,738 855,726 840,732 838,755 828,762 830,785 832,800 825,818 808,815 802,812 803,795 790,797 792,815 780,825 750,830 740,825 715,820 700,840 685,858 684,880 676,895 682,915 660,912 632,908 632,890 620,875 608,882 605,855 600,830 592,810 583,795 592,765 590,745 597,710 604,680 602,655 585,660 560,645 530,650 510,643 490,650 465,645 445,635 430,643 412,625 408,590 400,555 395,530 388,485 382,480 365,487 340,508 310,535 285,560 268,582 262,568 262,543 250,548 215,548 180,548 170,558 178,572 175,600 160,620 155,640 130,658 125,680 115,690 110,707 80,700 40,687 0,672"),
  ...W("862,725 820,713 780,702 735,693 690,688 640,682 620,680 605,687 590,687 575,678 570,665 575,650 530,643 480,638 430,634 380,632 350,640 335,655 330,678 345,682 348,692 340,693 300,685 250,675 215,667 185,665 180,652 190,640 182,630 187,615 170,600 148,585 152,565 157,545 150,520 145,490 133,480 135,465 120,440 108,415 95,405 70,410 50,408 32,400 30,380 40,370 45,340 42,320 30,300 35,288 60,280 75,275 95,282 119,284"),
];
const BORDERS: P[][] = [
  ...[
    "119,284 130,298 150,310 180,322 200,325 205,338 225,345 228,358 250,375 270,388 293,402",
    "293,402 340,400 345,412 365,398 385,385 395,362 430,355 452,343",
    "368,80 372,100 367,130 367,168 337,175 330,210 300,222 308,240 305,262 288,265 292,278 310,270 355,275 366,260 372,280 355,298 370,318 395,325 415,340 432,345 430,355",
    "378,75 368,100 385,112 400,115 410,102 425,100 422,85 410,82 405,95",
    "553,95 548,115 530,135 535,160 515,175 500,200 497,225 470,240 465,262 442,270 448,310 455,335 460,345",
    "452,343 465,338 500,325 560,315 600,305 610,290 618,305 622,320 640,330 670,338",
    "705,80 700,95 705,110 690,130 660,145 643,160 650,230 640,265 650,290 660,320 670,338",
    "735,84 755,100 748,110 742,130 765,140 775,135 778,115 765,105 755,88",
    "765,140 785,165 800,185 815,185 815,240 805,255 825,265 830,290 840,295",
    "670,338 700,320 735,300 760,305 790,295 820,300 840,295 860,302 885,300 905,308 925,307",
    "670,338 680,355 700,375 690,395 665,395 662,420 675,450 650,452 648,475 610,480 590,490 555,500",
    "455,343 470,345 490,380 520,440 540,475 530,495 555,500 555,520 585,535 605,528",
    "605,528 640,518 700,520 735,500 765,512 790,495 812,483",
    "920,308 915,325 885,335 870,375 840,400 825,425 815,440 830,460 820,470 812,483",
    "812,475 860,475 862,460 850,455",
    "293,402 288,430 272,470 250,475 255,488 275,500 300,505 325,535 365,558 430,562 430,545 460,552 490,570 492,588 530,600 570,610",
    "605,528 590,548 608,575 605,600 570,610 575,650",
    "812,483 818,520 805,530 803,555 815,575 845,582 855,572 845,600 850,645 860,650 865,690 862,725",
    "855,570 885,545 890,530 935,523 955,530 955,550 980,567 995,550 1003,530",
  ].map(W),
  ...[
    "65,475 70,490 85,492 95,507 108,495 112,478 118,470",
    "110,65 122,85 118,110 95,130 72,145 75,170 60,210 42,248",
    "45,252 80,225 120,203 165,185 205,190 205,178 215,175 212,190 185,205 180,210 205,222 215,238 255,248",
    "255,250 320,248 328,238 348,230 320,218 318,190",
    "288,80 275,100 285,120 270,150 280,155 285,185 318,192 318,183 345,195 385,183 405,176 415,160 402,140 418,125 415,90 396,78",
    "405,176 415,185 425,202 455,212 443,245 485,250 500,265",
    "40,250 75,275 85,285 87,325 105,350 137,375",
    "255,250 258,265 280,290 300,310 300,345 280,352 260,375 245,368 230,382 225,373 180,378 137,375 125,415 130,430 118,470 128,490 150,500 180,545",
    "222,440 228,415 238,408 242,435 235,455 222,440",
    "300,325 305,335 340,345 350,360 355,385 375,418 365,440 340,458 385,478",
    "375,418 385,395 405,388 425,395 430,405 455,400 462,420 475,440 520,445 520,430 500,435 500,415 510,418",
    "500,265 500,300 485,320 490,340 510,342 508,365 500,385 505,410 495,418",
    "400,345 400,315 415,325 430,318 435,345 425,355 422,375 405,372 395,350",
    "455,212 475,200 460,182 485,165 492,145 497,110 525,108 535,125 545,137 525,155",
    "540,132 545,137 575,143 592,135 593,100 600,85",
    "500,265 520,268 540,280 540,260 565,240 575,215 580,240 595,260 595,285 625,260 650,255 645,270 620,290",
    "622,292 640,300 700,302 740,305 770,297 800,295 830,288 845,295",
    "590,297 630,292 632,322 645,330 635,345 630,320 610,318 612,298 622,300 624,320",
    "615,330 610,345 613,365 595,380 595,405 615,425",
    "615,425 650,430 680,448 730,462 770,470 775,457 790,450 800,460 825,462 842,465",
    "615,425 622,468 555,470 562,480 552,512",
    "622,468 650,472 658,490 640,510 610,500 602,480 570,478",
    "650,495 690,505 685,525 705,530 712,560 710,600 703,630",
    "385,478 415,500 440,532 455,510 480,498 530,508 555,512 590,520 608,545 595,580 580,610 558,640",
    "602,655 605,645 645,650 652,622 685,618 703,628 708,605 722,607 725,622 760,622 775,632 790,620 820,610 840,595 862,590",
  ].map(S),
  ...[
    "398,37 397,70 358,95 355,130 350,178",
    "325,175 350,178 355,200 375,235 370,255 390,265 397,310 360,330 335,340 320,360 315,380 290,390 285,410 295,420",
    "325,175 312,210 298,240 300,258 265,272 255,288 220,282 195,262 195,240 160,232",
    "255,288 275,300 308,325 290,340 275,370 270,395 265,430",
    "275,390 285,405 290,420 335,408 355,405 380,403 465,400 480,390 465,380 490,370 530,355 565,325 585,325",
    "570,220 572,260 575,290 590,310 585,330 615,335 645,348 680,352 710,345 755,352 790,367",
    "487,368 487,405 520,410 555,440 555,480 572,520 575,550 570,580 555,585",
  ].map(E),
];
const LABELS: [string, number, number, number][] = [
  ["TEGAL", 481, 316, 31], ["TEGAL", 490, 352, 32], ["BREBES", 437, 358, 37], ["PEMALANG", 531, 353, 53], ["PEKALONGAN", 586, 321, 66], ["BATANG", 640, 349, 39],
  ["BANJARNEGARA", 575, 421, 79], ["WONOSOBO", 639, 435, 60], ["BANYUMAS", 482, 444, 54], ["CILACAP", 425, 452, 44], ["KEBUMEN", 583, 488, 46], ["PURWOREJO", 650, 497, 64],
  ["KENDAL", 705, 353, 39], ["SEMARANG", 747, 349, 55], ["DEMAK", 810, 325, 35], ["GROBOGAN", 863, 370, 58], ["TEMANGGUNG", 685, 401, 69], ["SEMARANG", 765, 404, 56], ["SALATIGA", 774, 418, 48],
  ["BOYOLALI", 807, 436, 49], ["SRAGEN", 883, 429, 41], ["MAGELANG", 716, 454, 55], ["KLATEN", 807, 494, 36], ["KARANGANYAR", 876, 479, 74], ["WONOGIRI", 880, 545, 55],
  ["JEPARA", 841, 254, 38], ["KUDUS", 863, 299, 33], ["PATI", 906, 289, 22], ["REMBANG", 984, 296, 49], ["BLORA", 976, 361, 33],
];
const MapCanvas = () => (
  <div className="w-[781px] shrink-0 border-2 border-[#2079c8] bg-white">
    <svg width="777" height="570" viewBox="309 126 777 570" className="block">
      <path d={rough(COAST, 0.55) + "Z"} fill="#826bb0" stroke="#18121f" strokeWidth="1" />
      <g fill="none" stroke="#120c1c" strokeWidth="1">
        {BORDERS.map((b, i) => <path key={i} d={rough(b, 0.75)} />)}
        <path d="M857 399l4 1-3 3 4-1v5l2-5 3 3-2-5 4 2v5l2 3-3 1 5 1-2 3 3-3 3 1-3-2 2-2-4 1v-4l-3-3 3-2M810 434l3 2-2 2 5-1-1 3 4 1" strokeWidth="1.100" />
        <path d="M889.500 206h2M826 248h1.500M828.500 251h1.500M963 268h1.500M970 261h1M972 267.500h2M975 266h2M973 270h1.500M976 269.500h1.500" strokeWidth="1.500" />
      </g>
      <g fontFamily="'DejaVu Sans Condensed', 'DejaVu Sans', sans-serif" fontSize="11" fill="#0d0814">
        {LABELS.map(([t, x, y, w], i) => <text key={i} x={x} y={y} textLength={w} lengthAdjust="spacingAndGlyphs">{t}</text>)}
      </g>
    </svg>
  </div>
);

/* ---------- layer styling ---------- */
const SymBtn = ({ children }: Kids) => <div className={BTN + " flex h-[26px] w-[30px] items-center justify-center"}>{children}</div>;
const StylingPanel = () => (
  <div className="flex w-[270px] shrink-0 flex-col pb-[3px] pl-[1px] pr-[3px]">
    <div className="-mr-[2px]"><PanelHead t="Layer Styling" l={86} m="w-[65px]" r={84} /></div>
    <div className={BTN + " mt-[6px] flex h-[21px] shrink-0 items-center overflow-hidden"}>
      <svg width="18" height="12" viewBox="0 0 24 16" className="ml-[4px] shrink-0"><path d="M2 11C0 3 4 1 9 3c4 1.500 7-1 11-1 4 1 3 10 0 11-3 0-5-3-9-2s-8 4-9 0z" fill="#eee" stroke="#999" strokeWidth="1.300" /></svg>
      <span className="ml-[1px] grow overflow-hidden pt-[1px] tracking-[-0.030px]">adm_jateng_bts_kabupaten_kota_250k_3300</span>
      <div className="flex h-full w-[16px] shrink-0 items-center justify-center border-l border-[#b0b0b0]"><Caret /></div>
    </div>
    <div className="mt-[7px] flex grow">
      <div className="flex w-[38px] shrink-0 flex-col">
        <div className="flex h-[37px] items-center justify-center">
          <I s={34}><path d="M8 4l7 1 2 3-9 4-3-3z" fill="#b6d98a" /><path d="M5 9l7 2-1 5-8-3z" fill="#6ab0e6" /><path d="M3 14l9 1 1 5-10-2z" fill="#a84868" /><path d="M8 13l6-4 4 4-5 7c-3-1-5-3-5-7z" fill="#b8b8ac" stroke="#88887c" strokeWidth=".6" /><path d="M13 9l7-6 2 1-5 8z" fill="#96907c" /></I>
        </div>
        <div className="flex grow flex-col items-center bg-[#5d5d5d] pt-[11px]">
          <svg width="29" height="16"><path d="M1 8l5-7.500h22v15H6z" fill="#fdee7a" stroke="#c8a400" strokeWidth="1.500" /><text x="16.500" y="12" fontSize="10" textAnchor="middle" letterSpacing=".7" fontFamily="DejaVu Sans, sans-serif" fill="#111">abc</text></svg>
          <svg width="30" height="32" viewBox="0 0 30 32" className="mt-[15px]"><path d="M4 5v16M26 5v16M15 9v16M4 20h7M19 20h7" stroke="#d07f24" strokeWidth="3.500" /><path d="M9 1h12v9H9z" fill="#ef5f60" stroke="#c33" /><path d="M1 20h12v10H1z" fill="#fbe772" stroke="#c8a422" /><path d="M17 20h12v10H17z" fill="#7fb2e6" stroke="#4a7cb4" /><path d="M1 20h12M17 20h12" stroke="#c8863a" strokeWidth="2.500" /></svg>
          <svg width="26" height="28" viewBox="0 0 26 28" className="mt-[8px]"><path d="M17 8l-7-7v4C4 5 0 8 2 14c1 2 4 3 6 3-3-4-1-6 2-6v4z" fill="#65a77b" stroke="#3d7d53" strokeWidth=".6" transform="translate(0 -.5)" /><path d="M11 17l7-6v4c6 0 8 3 6.500 7-1 2-4 4-6.500 4 2-3 2.500-5 0-5.500v4z" fill="#ee7b3c" stroke="#c65a1e" strokeWidth=".6" /></svg>
        </div>
      </div>
      <div className="ml-[3px] flex w-[225px] shrink-0 flex-col overflow-hidden">
        <div className={BTN + " flex h-[21px] w-[230px] shrink-0 items-center"}>
          <svg width="14" height="16" className="ml-[6px]"><g fill="#12ae5c" stroke="#0a6e38" strokeWidth=".8"><rect x=".5" y="1" width="11" height="3.500" rx="1" /><rect x="2.500" y="6" width="11" height="3.500" rx="1" /><rect x=".5" y="11" width="11" height="3.500" rx="1" /></g></svg>
          <span className="ml-[3px] pt-[1px] tracking-[-0.300px]">Single symbol</span>
        </div>
        <div className="mt-[8px] flex">
          <div className="h-[100px] w-[136px] border-2 border-[#bcbcbc] bg-white">
            <div className="flex h-[16px] items-center bg-[#f0f0f0] pl-[4px]">
              <svg width="17" height="16" className="block"><path d="M9 7.500h7" stroke="#999" strokeDasharray="1 1" /><rect x=".5" y="3.500" width="8" height="8" fill="#fff" stroke="#888" /><path d="M2 7.500h5" stroke="#333" /></svg>
              <div className="h-[16px] w-[16px] border border-[#3b5a98] bg-[#5a70bc]" /><b className="ml-[6px] pt-[2px]">Fill</b>
            </div>
            <div className="flex h-[16px] items-center pl-[29px]">
              <svg width="12" height="16" className="block"><path d="M.5 0v7.500H12" fill="none" stroke="#999" strokeDasharray="1 1" /></svg>
              <div className="h-[16px] w-[16px] border border-[#3a2f55] bg-[#826bb0]" /><span className="ml-[6px] pt-[2px] tracking-[-0.400px]">Simple fill</span>
            </div>
          </div>
          <div className="ml-[26px] mt-[20px] h-[61px] w-[61px] border border-black bg-[#826bb0]" />
        </div>
        <div className="mt-[9px] flex gap-[6px]">
          <SymBtn><I s={16}><path d="M9 2h6v7h7v6h-7v7H9v-7H2V9h7z" fill="#fff" stroke="#589060" strokeWidth="2" /><path d="M12 5v14M5 12h14" stroke="#589060" strokeWidth="2" /></I></SymBtn>
          <SymBtn><I s={16}><rect x="2" y="8.500" width="20" height="7" fill="#eee" stroke="#aaa" strokeWidth="1.500" /><path d="M5 12h14" stroke="#aaa" strokeWidth="2" /></I></SymBtn>
          <SymBtn><I s={18}><rect x="4" y="11" width="16" height="11" rx="2" fill="#c8c8c8" stroke="#aaa" /><path d="M8 4c2-4 9-3 9 2v5" stroke="#b4b4b4" strokeWidth="2.500" /></I></SymBtn>
          <SymBtn><I s={18}><path d="M3 3h14v15H3z" stroke="#aaa" strokeWidth="2" /><path d="M8 7h12v14H6" stroke="#bbb" strokeWidth="1.500" fill="#f0f0f0" /><rect x="14" y="15" width="7" height="7" fill="#ddd" stroke="#aaa" /></I></SymBtn>
          <SymBtn><I s={18}><path d="M12 4l9 14H3z" fill="#b0b0b0" stroke="#888" /></I></SymBtn>
          <SymBtn><I s={18}><path d="M12 20L3 6h18z" fill="#b0b0b0" stroke="#888" /></I></SymBtn>
        </div>
        <div className="mt-[9px] h-[1px] shrink-0 bg-[#9a9a9a]" />
        <div className="mt-[9px] flex h-[20px] shrink-0 items-center"><span className="w-[90px] shrink-0 pt-[1px]">Unit</span><div className={BTN + " flex h-[20px] w-[145px] shrink-0 items-center pl-[3px] pt-[1px]"}>Millimeter</div></div>
        <div className="mt-[5px] flex h-[18px] shrink-0 items-center"><span className="w-[90px] shrink-0 pt-[1px]">Transparency 0%</span><Slider w={145} /></div>
        <div className="mt-[4px] flex h-[22px] shrink-0 items-center"><span className="w-[90px] shrink-0 pt-[1px]">Color</span><div className="flex h-[22px] w-[145px] shrink-0 items-center rounded-[3px] border border-[#8a8a8a] bg-[#f8f8f8] pl-[4px]"><div className="h-[16px] w-[130px] rounded-[3px] bg-[#826bb0]" /></div></div>
        <div className="mt-[63px] flex h-[18px] shrink-0 items-center">
          <svg width="12" height="7" className="ml-[3px] shrink-0"><path d="M0 0h11l-5.500 6.500z" fill="#333" /></svg>
          <b className="ml-[6px] shrink-0 pt-[1px] text-[11px] tracking-[-0.050px] text-[#333]">Layer rendering</b><div className="ml-[8px] mb-[4px] h-[1px] grow bg-[#999]" />
        </div>
        <div className="mt-[4px] flex h-[20px] shrink-0 items-center"><span className="w-[115px] shrink-0 pt-[1px]">Layer transparency</span><Slider w={88} /><div className="ml-[6px] h-[20px] w-[20px] shrink-0 rounded-[2px] border border-[#aaa] bg-white pl-[4px] leading-[19px]">0</div></div>
        <div className="mt-[6px] flex h-[20px] shrink-0 items-center"><span className="w-[115px] shrink-0 pt-[1px]">Layer blending mode</span><Combo t="Normal" c="w-[79px]" /></div>
        <div className="mt-[7px] flex h-[20px] shrink-0 items-center"><span className="w-[115px] shrink-0 pt-[1px] tracking-[-0.270px]">Feature blending mode</span><Combo t="Normal" c="w-[79px]" /></div>
        <div className="mt-[8px] flex h-[14px] shrink-0 items-center gap-[4px]"><Check /><span className="pt-[1px]">Draw effects</span></div>
        <div className="mt-[12px] flex h-[14px] shrink-0 items-center gap-[4px]"><Check /><span className="pt-[1px] tracking-[-0.100px]">Control feature rendering order</span></div>
        <div className="mt-[15px] flex h-[16px] shrink-0 bg-[#e8e8e8]">
          <div className="flex w-[16px] items-center justify-center rounded-[2px] border border-[#888] bg-[#f6f6f6]"><div className="rotate-90"><Caret /></div></div>
          <div className="flex w-[154px] items-center justify-center rounded-[2px] border border-[#888] bg-linear-to-b from-[#fafafa] to-[#e2e2e2]"><Dots /></div>
          <div className="grow" />
          <div className="flex w-[16px] items-center justify-center rounded-[2px] border border-[#888] bg-[#f6f6f6]"><div className="rotate-90"><Caret /></div></div>
          <div className="flex w-[16px] items-center justify-center rounded-[2px] border border-[#888] bg-[#f6f6f6]"><div className="-rotate-90"><Caret /></div></div>
        </div>
        <div className="mt-[6px] flex h-[25px] shrink-0 items-center">
          <div className={BTN + " flex h-[25px] w-[26px] items-center justify-center"}><Undo s={15} /></div>
          <div className={BTN + " ml-[6px] flex h-[25px] w-[26px] items-center justify-center"}><Undo g s={15} /></div>
          <div className="ml-[6px]"><Check on /></div><span className="ml-[4px]">Live update</span>
          <div className={BTN + " ml-auto flex h-[23px] w-[75px] items-center justify-center pt-[1px]"}>Apply</div>
        </div>
      </div>
    </div>
  </div>
);

/* ---------- status bar and taskbar ---------- */
const QLogo = ({ s }: { s: number }) => (
  <I s={s}>
    <path fillRule="evenodd" d="M13 2c5-1 8 2 7.500 7-.4 4-2 7-4 9l4 2.500c-2 3-5 3-7.500.5-5 1.500-9-1-8.500-6.500C5 8.500 8 3 13 2zM13 5.500c-3 .5-5 4.500-5.200 8.500-.1 3 1.700 4.500 4.200 3.500 3-1.200 4.800-5 5-8.500.1-2.500-1.500-4-4-3.500z" fill="#dcea52" stroke="#a8b820" strokeWidth=".7" />
    <path d="M7 21l2-6 8-10.500-1.500-1L21.500.5l-.5 7-1.500-1L11 17.500z" fill="#226b26" />
  </I>
);
const StatusBar = () => (
  <div className="flex h-[30px] shrink-0 items-center pl-[517px]">
    <span className="w-[57px] shrink-0 pt-[1px]">Coordinate</span>
    <div className="flex h-[21px] w-[142px] shrink-0 items-center justify-center rounded-[3px] border border-[#a8a8a8] bg-white pt-[2px] tracking-[0.050px]">110.689,-8.618</div>
    <div className="ml-[3px]"><I s={18}><path d="M4 3l7 7M8 2l5 7M3 8l6 6M15 9l6-6M17 12l5-4" stroke="#555" strokeWidth="1.800" /><path d="M5 3q5-3 8 2t-3 6-7-3 2-5z" fill="#aaa" stroke="#444" /><circle cx="14" cy="16" r="6" fill="#ccc" stroke="#222" strokeWidth="1.600" /><circle cx="15" cy="17" r="2.500" stroke="#333" strokeWidth="1.400" /></I></div>
    <span className="ml-[12px] w-[30px] shrink-0 pt-[1px]">Scale</span>
    <div className="flex h-[21px] w-[89px] shrink-0 items-center rounded-[3px] border border-[#a8a8a8] bg-white"><span className="grow pl-[4px] pt-[2px]">1:1.758.799</span><div className="flex h-full w-[16px] items-center justify-center border-l border-[#b0b0b0] bg-[#f0f0f0]"><Caret /></div></div>
    <svg width="14" height="17" className="ml-[6px] shrink-0"><path d="M3.500 8V4.500q0-3.500 3.500-3.500t3.500 3.500V8" fill="none" stroke="#888" strokeWidth="1.800" /><rect x="1" y="7.500" width="12" height="8.500" rx="1" fill="#6a6a6a" /></svg>
    <span className="ml-[14px] w-[48px] shrink-0">Magnifier</span><Spin t="100%" c="w-[77px] shrink-0" />
    <span className="ml-[8px] w-[51px] shrink-0 pt-[1px]">Rotation</span><Spin t="0,0" c="w-[77px] shrink-0" />
    <div className="ml-[6px]"><Check on /></div><span className="ml-[4px] w-[54px]">Render</span>
    <I s={16}><circle cx="12" cy="12" r="8.500" stroke="#888" strokeWidth="4" /><path d="M12 0v24M0 12h24" stroke="#777" strokeWidth="1.500" /><circle cx="12" cy="12" r="4.500" fill="#ddd" stroke="#888" /></I>
    <span className="ml-[3px] w-[76px] pt-[1px]">EPSG:4326</span>
    <svg width="17" height="15" viewBox="0 0 17 15"><path d="M8 .5c5 0 8 2.500 8 6 0 2-1 3.500-2.500 4.500l1 3-4-2C4 13 .5 10 .5 6.500.5 3 3.500.5 8 .5z" fill="#555" /><g fill="#eee"><circle cx="4.800" cy="6.500" r="1.100" /><circle cx="8.300" cy="6.500" r="1.100" /><circle cx="11.800" cy="6.500" r="1.100" /></g></svg>
  </div>
);
const Task = ({ children, bar = true, on = false }: Kids & { bar?: boolean; on?: boolean }) => (
  <div className={"flex h-full w-[49px] shrink-0 flex-col items-center " + (on ? "bg-[#edf4f8]" : "")}>
    <div className="flex grow items-center pt-[2px]">{children}</div>
    <div className={(on ? "w-[47px]" : "w-[39px]") + " h-[2px] " + (bar ? "bg-[#0078d7]" : "")} />
  </div>
);
const Office = ({ c, l, sheet }: { c: string; l: string; sheet?: boolean }) => (
  <I><path d="M12 3h11v18H12z" fill="#fff" stroke={c} />{sheet ? <path d="M14 6h3M18.500 6h3M14 9h3M18.500 9h3M14 12h3M18.500 12h3M14 15h3M18.500 15h3M14 18h3M18.500 18h3" stroke={c} strokeWidth="1.700" /> : <path d="M14 6h7.500M14 9h7.500M14 12h7.500M14 15h7.500M14 18h7.500" stroke={c} strokeWidth="1.300" />}
    <path d="M1 3.500L14 1v22L1 20.500z" fill={c} /><text x="7.300" y="16" fontSize={sheet ? 12 : 10} fontWeight="700" textAnchor="middle" fill="#fff" fontFamily="Open Sans, sans-serif">{l}</text></I>
);
const Taskbar = () => (
  <div className="flex h-[40px] shrink-0 bg-linear-to-r from-[#c9e2ea] via-[#cfe0ec] to-[#d5dcea] font-['Open_Sans','Noto_Sans',sans-serif]">
    <div className="flex w-[48px] shrink-0 items-center justify-center"><svg width="16" height="16"><path d="M0 2.200l6.500-.9v6.200H0zM7.500 1.200L16 0v7.500H7.500zM0 8.500h6.500v6.200L0 13.800zM7.500 8.500H16V16l-8.500-1.200z" fill="#111" /></svg></div>
    <div className="flex w-[344px] shrink-0 items-center border border-[#c8d4da] bg-white pl-[11px]">
      <svg width="17" height="17"><circle cx="10" cy="6.500" r="5.300" fill="none" stroke="#222" strokeWidth="1.400" /><path d="M6.200 10.300L1 15.700" stroke="#222" strokeWidth="1.400" /></svg>
      <span className="ml-[11px] text-[14px] tracking-[-0.080px] text-[#333]">Type here to search</span>
    </div>
    <Task bar={false}><svg width="18" height="18"><circle cx="9" cy="9" r="7.200" fill="none" stroke="#111" strokeWidth="2" /></svg></Task>
    <Task bar={false}><svg width="18" height="16"><path d="M.5 1v3h10V1M.5 15v-3h10v3M.5 5.500h10v5H.500zM14.500 0v16M13 6h3v3h-3z" fill="none" stroke="#111" /></svg></Task>
    <Task><I><path d="M0 4V2.500h9l1.500 2H23V20H0z" fill="#f4c34a" /><path d="M0 2.500h9l1.500 2.500H0z" fill="#d89a1e" /><path d="M0 7h23v13H0z" fill="#fbd56c" /><path d="M4 13h16v8h-4v-4h-8v4H4z" fill="#3d94dc" /></I></Task>
    <Task bar={false}><I><path d="M.5 13C0 5 6 .5 12 .5s11.500 4 11.500 10c0 4-3 5.500-6 5.500s-4-1-4-2 1-1 1-3-2-4.500-5.500-4.500S1 9 .5 13z" fill="#35bfae" /><path d="M16 1.500c5 2 7.500 5 7.500 9s-3 5.500-6 5.500-4-1-4-2 1-1 1-3z" fill="#6ad06a" /><path d="M.5 12C.5 8 5 6 9 6.500c-3 1-5 4-5 8s3 8 7 9C5 23 .5 18 .5 12z" fill="#1178cc" /><path d="M9 8c-4 4-2 11 5 12 4 .5 6-.5 8-2-2 4-6 5.500-10 5.500-5 0-7-5-7-9 0-3 2-6 4-6.500z" fill="#1a56a8" /></I></Task>
    <Task><I><rect x="2" y="1" width="21" height="21" fill="#2a0303" stroke="#f0391e" strokeWidth="1.500" /><text x="12.500" y="16" fontSize="12.500" fontWeight="600" textAnchor="middle" fill="#fa3c1e" fontFamily="Open Sans, sans-serif">An</text></I></Task>
    <Task><I><circle cx="12" cy="12" r="11" fill="#fbc116" /><path d="M12 12L2.500 6.500A11 11 0 0 1 21.500 6.500L12 7z" fill="#db4437" /><path d="M2.500 6.500L8 15l4 2-3 5.500A11 11 0 0 1 2.500 6.500z" fill="#1da462" /><circle cx="12" cy="12" r="5.500" fill="#fff" /><circle cx="12" cy="12" r="4.300" fill="#4a8af4" /></I></Task>
    <Task on><QLogo s={25} /></Task>
    <Task><Office c="#1d7044" l="X" sheet /></Task>
    <Task><Office c="#2a5699" l="W" /></Task>
    <div className="grow" />
    <div className="flex shrink-0 items-center pr-[24px] text-[#111]">
      <svg width="13" height="8"><path d="M1 7l5.500-5.500L12 7" fill="none" stroke="#111" strokeWidth="1.300" /></svg>
      <svg width="16" height="10" className="ml-[11px]"><path d="M.5.500h12.500v8.500H.500zM13.500 3h1.500v3.500h-1.500" fill="none" stroke="#111" strokeWidth="1.100" /><path d="M2 2h6v5.500H2z" fill="#111" /></svg>
      <svg width="15" height="14" className="ml-[10px]"><path d="M1 13C1 6 6 1 13.500 1M4 13c0-5 4-9 9.500-9M7 13c0-3.500 3-6 6.500-6M10 13c0-2 1.500-3 3.500-3" fill="none" stroke="#222" strokeWidth="1.200" /><circle cx="12.500" cy="12" r="1.300" fill="#111" /></svg>
      <svg width="17" height="14" className="ml-[6px]"><path d="M1 5h2.500L7 1.500v11L3.500 9H1z" fill="none" stroke="#111" strokeWidth="1.100" /><path d="M9 5q1.500 2 0 4M11.300 3q3 4 0 8M13.600 1.500q4 5.500 0 11" fill="none" stroke="#222" /></svg>
      <div className="ml-[8px] w-[63px] text-center text-[11.500px] leading-[18px] tracking-[-0.300px]"><div>23:44</div><div>20/04/2021</div></div>
      <svg width="18" height="17" className="ml-[15px] mt-[1px]"><path d="M1 1.500h15.500v11h-5l-2.500 3-2.500-3H1z" fill="none" stroke="#111" strokeWidth="1.300" /></svg>
    </div>
  </div>
);
const MENU: [string, string][] = [
  ["Project", "w-[49px]"], ["Edit", "w-[33px]"], ["View", "w-[37px]"], ["Layer", "w-[42px]"], ["Settings", "w-[54px]"], ["Plugins", "w-[49px]"], ["Vector", "w-[44px]"], ["Raster", "w-[47px]"], ["Database", "w-[61px]"], ["Web", "w-[37px]"], ["Processing", "w-[66px]"], ["Help", "w-[30px]"],
];

export default function App() {
  return (
    <div className="relative flex h-[768px] w-[1366px] flex-col overflow-hidden whitespace-nowrap bg-[#f0f0f0] font-['DejaVu_Sans_Condensed','DejaVu_Sans',sans-serif] text-[11px] leading-[14px] tracking-[-0.180px] text-black">
      <div className="flex h-[23px] shrink-0 items-center bg-white pl-[3px] font-['Open_Sans','Noto_Sans',sans-serif] text-[12px]">
        <QLogo s={16} /><span className="ml-[4px] tracking-[-0.300px]">QGIS 2.18.18 - fjfj</span>
        <div className="ml-auto flex items-center gap-[35px] pr-[19px]">
          <svg width="11" height="11"><path d="M0 5.500h10" stroke="#111" /></svg>
          <svg width="11" height="11"><path d="M.5 2.500h8v8h-8zM2.500 2.500v-2h8v8h-2" fill="none" stroke="#111" /></svg>
          <svg width="11" height="11"><path d="M.5.500l10 10M10.500.500l-10 10" stroke="#111" /></svg>
        </div>
      </div>
      <div className="flex h-[22px] shrink-0 items-center pl-[9px] pt-[3px]">{MENU.map(([t, w]) => <div key={t} className={w + " shrink-0"}>{t}</div>)}</div>
      <Toolbar1 />
      <Toolbar2 />
      <div className="flex h-[575px] shrink-0 pt-[1px]">
        <SideBar />
        <div className="flex w-[249px] shrink-0 flex-col pl-[1px]"><BrowserPanel /><LayersPanel /></div>
        <div className="flex w-[6px] shrink-0 items-center justify-center"><GripV h={190} /></div>
        <MapCanvas />
        <div className="flex w-[8px] shrink-0 items-center justify-center"><GripV h={190} /></div>
        <StylingPanel />
      </div>
      <StatusBar />
      <Taskbar />
      <div className="pointer-events-none absolute left-[1073px] top-[650px] font-['Open_Sans','Noto_Sans',sans-serif] tracking-normal text-[#8c8c8c]/70">
        <div className="text-[18.500px] leading-[24px] tracking-[0.350px]">Activate Windows</div>
        <div className="text-[14px] leading-[22px] tracking-[0.200px]">Go to Settings to activate Windows.</div>
      </div>
    </div>
  );
}
